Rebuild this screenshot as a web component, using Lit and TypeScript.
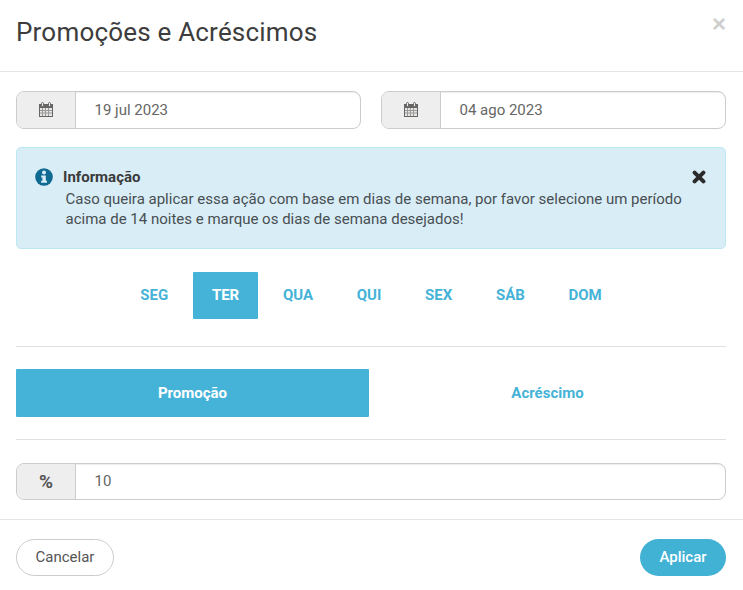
import { LitElement, html, css, svg } from "lit";
import { customElement } from "lit/decorators.js";

const calendar = svg`<svg class="cal" width="14" height="15" viewBox="0 0 14 15">
  <rect x="0.5" y="2.5" width="13" height="12" fill="#e9e5e2" stroke="#666"/>
  <rect x="0.5" y="2.5" width="13" height="3" fill="#666" stroke="#666"/>
  <path d="M3.5 6v8M6.5 6v8M9.5 6v8M1 8.5h12M1 11h12" stroke="#999" stroke-width="1"/>
  <rect x="2.5" y="0.5" width="2" height="4" rx="1" fill="#eee" stroke="#666" stroke-width="1"/>
  <rect x="9.5" y="0.5" width="2" height="4" rx="1" fill="#eee" stroke="#666" stroke-width="1"/>
</svg>`;

@customElement("app-root")
export class AppRoot extends LitElement {
  static styles = css`
    :host {
      display: block;
      width: 743px;
      height: 590px;
      background: #fff;
      font-family: Roboto, "Liberation Sans", sans-serif;
      color: #555;
      box-sizing: border-box;
      overflow: hidden;
    }
    * { box-sizing: border-box; }
    .header {
      height: 72px;
      border-bottom: 1px solid #e5e5e5;
      padding: 0 17px 0 16px;
      display: flex;
      justify-content: space-between;
      align-items: flex-start;
    }
    h1 {
      margin: 15px 0 0;
      font-size: 26px;
      line-height: 34px;
      font-weight: 400;
      color: #3d3d3d;
      letter-spacing: 0.2px;
    }
    .close {
      margin: 10px 0 0 0;
      font-size: 24px;
      line-height: 28px;
      font-weight: 700;
      color: #cfcfcf;
      font-family: "Liberation Sans", sans-serif;
    }
    .body { padding: 19px 17px 0 16px; }
    .dates {
      display: grid;
      grid-template-columns: 1fr 1fr;
      gap: 20px;
    }
    .group {
      display: flex;
      height: 38px;
      border: 1px solid #ccc;
      border-radius: 8px;
      overflow: hidden;
      box-shadow: inset 0 1px 1px rgba(0, 0, 0, 0.075);
    }
    .group.pct { height: 37px; }
    .addon {
      flex: 0 0 59px;
      background: #eee;
      border-right: 1px solid #ccc;
      display: flex;
      align-items: center;
      justify-content: center;
      color: #555;
    }
    .addon.sym { font-weight: 700; font-size: 19px; padding-bottom: 1px; }
    .cal { display: block; margin-top: -1px; }
    .val {
      padding-left: 18.5px;
      font-size: 15px;
      color: #666;
      display: flex;
      align-items: center;
    }
    .pct .val { padding-bottom: 1px; }
    .alert {
      position: relative;
      margin-top: 18px;
      height: 102px;
      background: #d9edf7;
      border: 1px solid #bce8f1;
      border-radius: 5px;
      padding: 19px 19px 0 18px;
      color: #444;
    }
    .alert-head {
      display: flex;
      align-items: center;
      gap: 10px;
      font-size: 15px;
      line-height: 20px;
      font-weight: 700;
      color: #3a3a3a;
    }
    .info { display: block; }
    .alert p {
      margin: 2px 0 0 30.5px;
      font-size: 15px;
      line-height: 20px;
      color: #484f52;
    }
    .dismiss {
      position: absolute;
      top: 22px;
      right: 19px;
      display: block;
    }
    .days {
      display: flex;
      justify-content: center;
      gap: 6.3px;
      margin-top: 23px;
      padding-bottom: 27px;
      border-bottom: 1px solid #e0e0e0;
    }
    .day {
      height: 47px;
      padding: 0 18.7px 2px;
      display: flex;
      align-items: center;
      font-size: 15px;
      font-weight: 700;
      color: #45b3d7;
      border-radius: 1px;
    }
    .day.on { background: #45b3d7; color: #fff; }
    .toggle {
      display: grid;
      grid-template-columns: 353px 1fr;
      margin-top: 22px;
      padding-bottom: 22px;
      border-bottom: 1px solid #e0e0e0;
    }
    .tab {
      height: 48px;
      display: flex;
      align-items: center;
      justify-content: center;
      font-size: 15px;
      font-weight: 700;
      color: #45b3d7;
    }
    .tab.on { background: #45b3d7; color: #fff; border-radius: 1px; }
    .pct { margin-top: 23px; }
    .footer {
      margin-top: 19px;
      border-top: 1px solid #e5e5e5;
      padding: 19px 17px 0 16px;
      display: flex;
      justify-content: space-between;
    }
    .btn {
      height: 37px;
      border-radius: 19px;
      display: flex;
      align-items: center;
      justify-content: center;
      font-size: 15px;
      padding-bottom: 2px;
    }
    .cancel { width: 98px; border: 1px solid #ccc; color: #555; background: #fff; }
    .apply { width: 86px; background: #41b1d4; color: #fff; font-weight: 500; }
  `;

  render() {
    const days = ["SEG", "TER", "QUA", "QUI", "SEX", "SÁB", "DOM"];
    return html`
      <div class="header">
        <h1>Promoções e Acréscimos</h1>
        <div class="close">×</div>
      </div>
      <div class="body">
        <div class="dates">
          <div class="group"><div class="addon">${calendar}</div><div class="val">19 jul 2023</div></div>
          <div class="group"><div class="addon">${calendar}</div><div class="val">04 ago 2023</div></div>
        </div>
        <div class="alert">
          <div class="alert-head">
            <svg class="info" width="18" height="18" viewBox="0 0 18 18">
              <circle cx="9" cy="9" r="8.8" fill="#0f6a92"/>
              <circle cx="9" cy="4.4" r="2" fill="#d9edf7"/>
              <path d="M6.2 7.4h4.6v5.3h1.2v2.1H6.1v-2.1h1.3V9.5H6.2z" fill="#d9edf7"/>
            </svg>
            <span>Informação</span>
          </div>
          <p>Caso queira aplicar essa ação com base em dias de semana, por favor selecione um período acima de 14 noites e marque os dias de semana desejados!</p>
          <svg class="dismiss" width="14" height="14" viewBox="0 0 14 14">
            <path d="M2.6 2.6L11.4 11.4M11.4 2.6L2.6 11.4" stroke="#2b2b2b" stroke-width="4" stroke-linecap="round"/>
          </svg>
        </div>
        <div class="days">
          ${days.map((d) => html`<div class="day ${d === "TER" ? "on" : ""}">${d}</div>`)}
        </div>
        <div class="toggle">
          <div class="tab on">Promoção</div>
          <div class="tab">Acréscimo</div>
        </div>
        <div class="group pct"><div class="addon sym">%</div><div class="val">10</div></div>
      </div>
      <div class="footer">
        <div class="btn cancel">Cancelar</div>
        <div class="btn apply">Aplicar</div>
      </div>
    `;
  }
}
